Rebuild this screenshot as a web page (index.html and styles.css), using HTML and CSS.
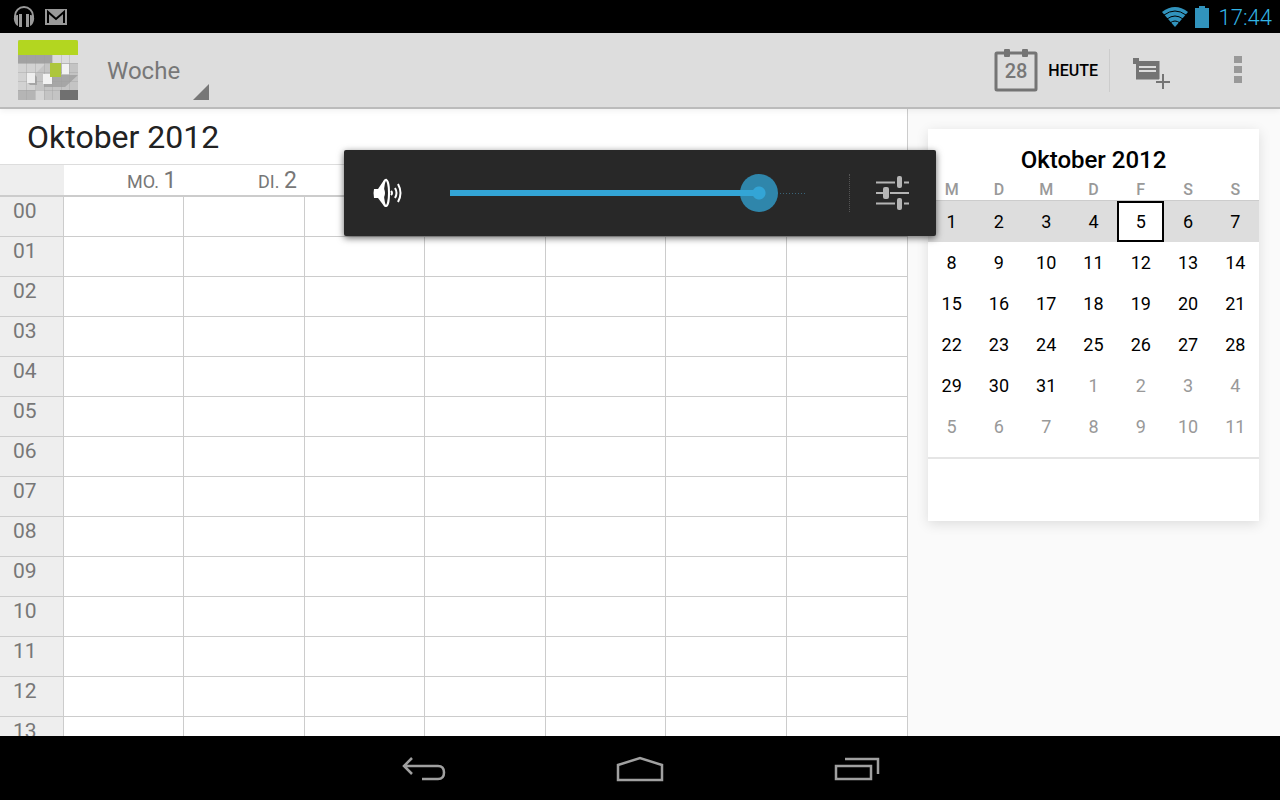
FILE: index.html
```html
<!DOCTYPE html>
<html lang="de">
<head>
  <meta charset="UTF-8" />
  <meta name="viewport" content="width=device-width, initial-scale=1.0"/>
  <title>Kalender</title>
  <link rel="stylesheet" href="styles.css">
</head>
<body>
  <div class="status-bar">
    <div class="status-left">
      <!-- headphones -->
      <svg width="22" height="22" viewBox="0 0 22 22">
        <path d="M2 12V10A9 9 0 0 1 20 10V12" fill="none" stroke="#999" stroke-width="2"/>
        <path d="M4 9Q0 10 1 14Q2 19 5 20V9ZM18 9Q22 10 21 14Q20 19 17 20V9ZM6 8H9V21H6ZM13 8H16V21H13Z" fill="#999"/>
      </svg>
      <!-- mail -->
      <svg width="22" height="16" viewBox="0 0 22 16">
        <rect width="22" height="16" fill="#999"/>
        <path d="M3 14V3L11 10L19 3V14" fill="none" stroke="#000" stroke-width="2"/>
      </svg>
    </div>
    <div class="status-right">
      <svg width="28" height="22" viewBox="0 0 28 22">
        <path d="M14 21L1 6Q14 -4 27 6Z" fill="#3193bd"/>
        <path d="M3 9Q14 1 25 9M6 13Q14 7 22 13M9 17Q14 13 19 17" fill="none" stroke="#000" stroke-width="1"/>
      </svg>
      <svg width="14" height="22" viewBox="0 0 14 22">
        <path d="M4 0H10V2H14V22H0V2H4Z" fill="#3193bd"/>
      </svg>
      <span class="clock">17:44</span>
    </div>
  </div>

  <header class="action-bar">
    <svg class="app-icon" width="60" height="60" viewBox="1 1 60 60">
      <rect x="0" y="0" width="62" height="62" rx="3" fill="#c4c4c4"/>
      <rect x="1" y="16" width="60" height="45" fill="#c4c4c4"/>
      <path d="M1 16H35V24H1Z" fill="#a2a2a2"/>
      <path d="M35 16H61V24H35Z" fill="#dcdcdc"/>
      <path d="M1 25H28L19 34V52H1Z" fill="#d2d2d2"/>
      <path d="M44 36H61L48 48H27V45H35V38H44Z" fill="#a6a6a6"/>
      <path d="M11 44H18V36L20 38V46H13Z" fill="#a6a6a6"/>
      <path d="M1 51H18V61H1Z" fill="#b5b5b5"/>
      <path d="M18 51H27V61H18Z" fill="#d5d5d5"/>
      <path d="M1 24.500H61M1 33.500H61M1 42.500H61M1 51.500H61M9.500 16V61M18.500 16V61M27.500 16V61M35.500 16V61M44.500 16V61M52.500 16V61" stroke="#9d9d9d" stroke-opacity=".35"/>
      <rect x="10" y="34" width="8" height="10" fill="#eee"/>
      <rect x="26" y="35" width="9" height="10" fill="#f2f2f2"/>
      <rect x="45" y="25" width="7" height="10" fill="#f2f2f2"/>
      <rect x="33" y="24" width="11" height="14" fill="#adc63c"/>
      <rect x="43" y="51" width="18" height="10" fill="#707070"/>
      <path d="M1 3Q1 1 3 1H59Q61 1 61 3V16H1Z" fill="#b3d620"/>
    </svg>
    <button class="spinner">Woche
      <svg width="16" height="16" viewBox="0 0 16 16"><path d="M16 0V16H0Z" fill="#777"/></svg>
    </button>
    <div class="actions">
      <button class="today">
        <svg width="44" height="44" viewBox="0 0 44 44">
          <rect x="2" y="5" width="40" height="37" rx="1" fill="none" stroke="#747474" stroke-width="3"/>
          <rect x="10" y="1" width="6" height="8" rx="1" fill="#747474"/>
          <rect x="28" y="1" width="6" height="8" rx="1" fill="#747474"/>
          <text x="22" y="30" text-anchor="middle" class="icon-day">28</text>
        </svg>
        HEUTE
      </button>
      <button class="icon-button new-event" aria-label="Neuer Termin">
        <svg width="38" height="32" viewBox="0 0 38 32">
          <path d="M0 0H6V3H26V21H3V6H0Z" fill="#747474"/>
          <path d="M6 9H23M6 13H23" stroke="#ddd" stroke-width="2"/>
          <path d="M22 21H26V17H32V26H26V22H22Z" fill="#ddd"/>
          <path d="M26 3V21H3" fill="none" stroke="#747474"/>
          <path d="M30 16V31M23 24H37" stroke="#747474" stroke-width="2"/>
        </svg>
      </button>
      <button class="icon-button overflow" aria-label="Mehr">
        <svg width="8" height="28" viewBox="0 0 8 28"><path d="M0 0H8V7H0ZM0 10H8V17H0ZM0 20H8V27H0Z" fill="#999"/></svg>
      </button>
    </div>
  </header>

  <main class="content">
    <section class="week">
      <h1>Oktober 2012</h1>
      <table class="week-grid">
        <colgroup><col class="hour-col"><col span="7"></colgroup>
        <thead>
          <tr><th></th><th>MO. <b>1</b></th><th>DI. <b>2</b></th><th></th><th></th><th></th><th></th><th></th></tr>
        </thead>
        <tbody>
          <tr><th>00</th><td></td><td></td><td></td><td></td><td></td><td></td><td></td></tr>
          <tr><th>01</th><td></td><td></td><td></td><td></td><td></td><td></td><td></td></tr>
          <tr><th>02</th><td></td><td></td><td></td><td></td><td></td><td></td><td></td></tr>
          <tr><th>03</th><td></td><td></td><td></td><td></td><td></td><td></td><td></td></tr>
          <tr><th>04</th><td></td><td></td><td></td><td></td><td></td><td></td><td></td></tr>
          <tr><th>05</th><td></td><td></td><td></td><td></td><td></td><td></td><td></td></tr>
          <tr><th>06</th><td></td><td></td><td></td><td></td><td></td><td></td><td></td></tr>
          <tr><th>07</th><td></td><td></td><td></td><td></td><td></td><td></td><td></td></tr>
          <tr><th>08</th><td></td><td></td><td></td><td></td><td></td><td></td><td></td></tr>
          <tr><th>09</th><td></td><td></td><td></td><td></td><td></td><td></td><td></td></tr>
          <tr><th>10</th><td></td><td></td><td></td><td></td><td></td><td></td><td></td></tr>
          <tr><th>11</th><td></td><td></td><td></td><td></td><td></td><td></td><td></td></tr>
          <tr><th>12</th><td></td><td></td><td></td><td></td><td></td><td></td><td></td></tr>
          <tr><th>13</th><td></td><td></td><td></td><td></td><td></td><td></td><td></td></tr>
        </tbody>
      </table>
    </section>

    <aside class="sidebar">
      <div class="month-card">
        <h2>Oktober 2012</h2>
        <table class="month">
          <thead>
            <tr><th>M</th><th>D</th><th>M</th><th>D</th><th>F</th><th>S</th><th>S</th></tr>
          </thead>
          <tbody>
            <tr class="current"><td>1</td><td>2</td><td>3</td><td>4</td><td class="selected">5</td><td>6</td><td>7</td></tr>
            <tr><td>8</td><td>9</td><td>10</td><td>11</td><td>12</td><td>13</td><td>14</td></tr>
            <tr><td>15</td><td>16</td><td>17</td><td>18</td><td>19</td><td>20</td><td>21</td></tr>
            <tr><td>22</td><td>23</td><td>24</td><td>25</td><td>26</td><td>27</td><td>28</td></tr>
            <tr><td>29</td><td>30</td><td>31</td><td class="other">1</td><td class="other">2</td><td class="other">3</td><td class="other">4</td></tr>
            <tr><td class="other">5</td><td class="other">6</td><td class="other">7</td><td class="other">8</td><td class="other">9</td><td class="other">10</td><td class="other">11</td></tr>
          </tbody>
        </table>
        <div class="calendars"></div>
      </div>
    </aside>
  </main>

  <nav class="nav-bar">
    <button aria-label="Zurück">
      <svg width="44" height="26" viewBox="0 0 44 26"><path d="M10 2L2 10L10 18M2 10H36Q42 10 42 16.500Q42 23 36 23H20" fill="none" stroke="#a0a0a0" stroke-width="2.500"/></svg>
    </button>
    <button aria-label="Startseite">
      <svg width="48" height="26" viewBox="0 0 48 26"><path d="M2 24V9L24 2L46 9V24Z" fill="none" stroke="#a0a0a0" stroke-width="2.500"/></svg>
    </button>
    <button aria-label="Letzte Apps">
      <svg width="46" height="26" viewBox="0 0 46 26"><path d="M2 10H37V23H2ZM11 3H44V18" fill="none" stroke="#a0a0a0" stroke-width="2.500"/></svg>
    </button>
  </nav>

  <div class="volume">
    <svg class="speaker" width="30" height="30" viewBox="0 0 30 30">
      <path d="M1 11H5L11 2Q13 0 14 1V28Q13 30 11 28L5 20H1Q0 15 1 11Z" fill="#fff"/>
      <ellipse cx="13" cy="15" rx="3" ry="13" fill="#282828" stroke="#fff" stroke-width="2"/>
      <path d="M11 11Q13 15 11 19Z" fill="#fff"/>
      <path d="M18 13Q20 15 18 17M22 10Q25 15 22 20M25 6Q30 15 25 24" fill="none" stroke="#fff" stroke-width="2"/>
    </svg>
    <input type="range" min="0" max="100" value="91" aria-label="Lautstärke">
    <button class="volume-settings" aria-label="Toneinstellungen">
      <svg width="34" height="34" viewBox="0 0 34 34">
        <path d="M0 6.500H19M28 6.500H33M0 17H7M14 17H33M0 27.500H19M28 27.500H33" stroke="#b5b5b5" stroke-width="2"/>
        <rect x="21" y="0" width="5" height="12" rx="2" fill="#b5b5b5"/>
        <rect x="7" y="11" width="6" height="12" rx="2" fill="#b5b5b5"/>
        <rect x="21" y="22" width="5" height="12" rx="2" fill="#b5b5b5"/>
      </svg>
    </button>
  </div>
</body>
</html>
```
FILE: styles.css
```css
* { box-sizing: border-box; }

html, body {
  height: 100%;
  margin: 0;
}

body {
  display: flex;
  flex-direction: column;
  overflow: hidden;
  font-family: Roboto, "Noto Sans", sans-serif;
  background: #fff;
}

button { background: none; border: none; padding: 0; font-family: inherit; cursor: pointer; }
svg { display: block; flex-shrink: 0; }

/* status bar */
.status-bar { flex: none; height: 33px; padding: 0 8px 0 13px; display: flex; justify-content: space-between; align-items: center; background: #000; }
.status-left, .status-right { display: flex; align-items: center; }
.status-left { gap: 10px; }
.status-right { gap: 6px; }
.clock { margin-left: 4px; padding-top: 2px; font-size: 22px; font-weight: 300; color: #33b5e5; }

/* action bar */
.action-bar { position: relative; flex: none; height: 76px; padding: 0 18px; display: flex; align-items: center; background: #ddd; border-bottom: 2px solid #bbb; box-shadow: 0 2px 6px rgba(0,0,0,0.06); }
.spinner { position: relative; height: 60px; margin-left: 17px; padding: 2px 29px 0 12px; font-size: 24px; color: #777; }
.spinner svg { position: absolute; right: 0; bottom: 0; }
.actions { display: flex; align-items: center; height: 100%; margin-left: auto; }
.today { display: flex; align-items: center; gap: 10px; height: 43px; padding-right: 11px; font-size: 16px; font-weight: 500; color: #000; border-right: 1px solid #ccc; }
.icon-day { font-size: 20px; font-weight: 500; fill: #777; }
.icon-button { display: flex; align-items: center; justify-content: center; height: 48px; }
.new-event { width: 84px; padding-top: 8px; }
.overflow { width: 48px; margin-left: 20px; }

/* week view */
.content { flex: 1; min-height: 0; display: flex; }
.week { flex: 1; min-width: 0; overflow: hidden; border-right: 1px solid #ccc; }
.week h1 { margin: 0; padding: 2px 0 0 27px; font-size: 32px; line-height: 53px; font-weight: 400; color: #222; }
.week-grid { width: 100%; table-layout: fixed; border-collapse: separate; border-spacing: 0; color: #777; }
.week-grid th { padding: 0; font-weight: 400; }
.hour-col { width: 64px; }
.week-grid thead th { height: 32px; padding: 3px 8px 0 0; font-size: 18px; line-height: 26px; text-align: right; border-top: 1px solid #ddd; border-bottom: 2px solid #ccc; }
.week-grid thead b { font-size: 23px; font-weight: 400; }
.week-grid tr th:first-child { background: #eee; }
.week-grid tbody th { height: 40px; padding-left: 13px; font-size: 21px; line-height: 28px; text-align: left; vertical-align: top; }
.week-grid tbody th, .week-grid td { border-right: 1px solid #ccc; border-bottom: 1px solid #ccc; }
.week-grid tr > :last-child { border-right: none; }

/* month card */
.sidebar { width: 372px; padding: 20px 21px 20px 20px; background: #fafafa; }
.month-card { background: #fff; box-shadow: 0 3px 12px rgba(0,0,0,0.12); }
.month-card h2 { margin: 0; padding-top: 13px; font-size: 24px; line-height: 36px; font-weight: 500; text-align: center; color: #000; }
.month { width: 100%; table-layout: fixed; border-collapse: separate; border-spacing: 0; text-align: center; }
.month th { height: 23px; padding: 0; font-size: 16px; font-weight: 500; color: #999; border-bottom: 1px solid #ccc; }
.month td { height: 41px; padding: 0; font-size: 18px; color: #000; }
.month .current { background: #ddd; }
.month .selected { background: #fff; border: 2px solid #000; }
.month .other { color: #999; }
.calendars { height: 74px; padding-top: 10px; }
.calendars:before { content: ""; display: block; border-top: 2px solid #e5e5e5; }

/* system buttons */
.nav-bar { flex: none; height: 64px; padding: 2px 0 0 2px; display: flex; justify-content: center; gap: 170px; background: #000; }
.nav-bar button { display: flex; align-items: center; }

/* volume overlay */
.volume { position: absolute; top: 150px; left: 50%; width: 592px; height: 86px; margin-left: -296px; padding: 0 26px 0 29px; display: flex; align-items: center; background: #282828; border-radius: 2px; box-shadow: 0 2px 7px rgba(0,0,0,0.6); }
.volume input {
  flex: 1;
  height: 40px;
  margin: 0 42px 0 47px;
  appearance: none;
  background:
    linear-gradient(#33a5d6, #33a5d6) left center / 310px 6px no-repeat,
    repeating-linear-gradient(to right, #3a6478 0 1px, transparent 1px 3px) right center / 30px 1px no-repeat;
}
.volume input::-webkit-slider-thumb { appearance: none; width: 38px; height: 38px; border-radius: 50%; background: linear-gradient(#33a5d6, #33a5d6) left center / 19px 6px no-repeat, radial-gradient(circle, #33a5d6 6px, #2f86ab 7px); }
.volume-settings { display: flex; align-items: center; height: 38px; padding-left: 26px; border-left: 1px dotted #555; }
```
